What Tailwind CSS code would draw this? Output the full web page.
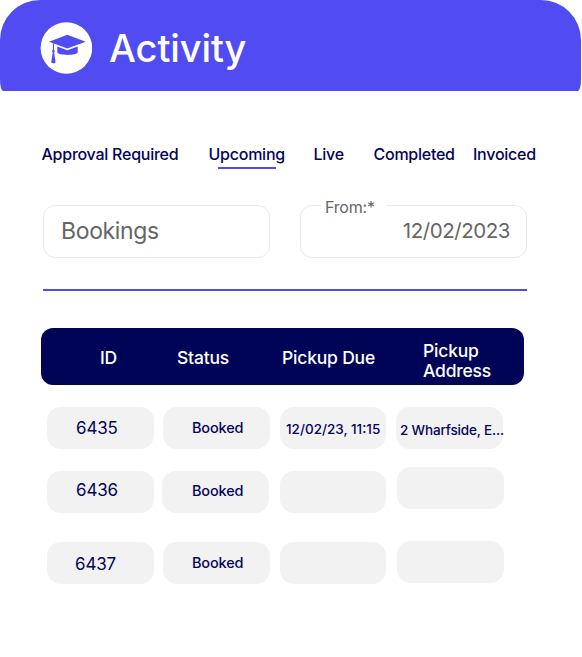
<!DOCTYPE html>
<html lang="en">
<head>
    <meta charset="UTF-8">
    <meta name="viewport" content="width=device-width, initial-scale=1.0">
    <title>Activity</title>
    <script src="https://cdn.jsdelivr.net/npm/@tailwindcss/browser@4"></script>
</head>
<body class="bg-white font-['Inter',sans-serif] text-[#03045a]">
    <div class="w-[582px] h-[657px] overflow-hidden">
        <!-- Header -->
        <header class="w-[581px] h-[91px] bg-[#514cf2] [border-radius:40px_40px_3px_3px/40px_40px_12px_12px] flex items-center pl-10 pt-1">
            <svg class="size-[52px] shrink-0" viewBox="0 0 52 52">
                <circle cx="26.4" cy="26" r="25.8" fill="#fff"/>
                <g fill="#514cf2">
                    <path d="M27.3 12.8 L45.7 19.8 L27.3 26.6 L9 19.8 Z"/>
                    <path d="M17.3 24.6 L27.3 28.2 L37.7 24.6 V30.6 C36.5 33.8 18.5 33.8 17.3 30.6 Z"/>
                    <path d="M12.9 21.2 H14 V27.6 L14.8 29 L14.2 30.8 L15.6 40.6 Q13.4 42.2 11.2 40.6 L12.7 30.8 L12.1 29 L12.9 27.6 Z"/>
                </g>
            </svg>
            <h1 class="ml-[17px] text-[38px] leading-none font-medium tracking-[-0.1px] text-white">Activity</h1>
        </header>

        <!-- Tabs -->
        <nav class="mt-[53px] ml-[41.5px] grid grid-cols-[167px_105px_60px_99.5px_70px] text-base leading-5 font-medium tracking-[-0.25px] whitespace-nowrap">
            <a>Approval Required</a>
            <a>Upcoming<span class="block w-[58px] h-0.5 mt-[3px] ml-[9px] bg-[#514cf2]"></span></a>
            <a>Live</a>
            <a>Completed</a>
            <a>Invoiced</a>
        </nav>

        <!-- Filters -->
        <div class="mt-9 ml-[43px] flex gap-[30px] text-[#666]">
            <div class="w-[227px] h-[53px] border border-[#e9e9e9] rounded-xl px-[17px] text-[23px] leading-[50px] tracking-[-0.35px]">Bookings</div>
            <div class="relative w-[227px] h-[53px] border border-[#e9e9e9] rounded-xl px-4 text-right text-[20.5px] leading-[50px] tracking-[-0.45px]">
                <span class="absolute left-5 -top-[9px] w-[66px] bg-white pl-1 text-left text-base leading-5 tracking-[-0.2px]">From:*</span>
                12/02/2023
            </div>
        </div>

        <div class="mt-[31px] ml-[43px] w-[484px] h-[2px] bg-[#514cf2]"></div>

        <!-- Table head -->
        <div class="mt-[37px] ml-[41px] w-[483px] h-[57px] rounded-xl bg-[#000456] text-white grid grid-cols-[59px_77px_105px_141px_1fr] items-center text-[17.5px] leading-5 font-medium tracking-[-0.2px] whitespace-nowrap">
            <span></span>
            <span class="pt-[3px]">ID</span>
            <span class="pt-[3px]">Status</span>
            <span class="pt-[3px]">Pickup Due</span>
            <span class="pt-2">Pickup<br>Address</span>
        </div>

        <!-- Rows -->
        <div class="mt-[22px] ml-[47px] flex items-start whitespace-nowrap font-medium text-[14.5px] tracking-[-0.15px]">
            <div class="w-[107px] h-[42px] rounded-[14px] bg-[#f2f2f2] pl-[29px] text-[17px] leading-[42px] font-normal">6435</div>
            <div class="ml-[9px] w-[107px] h-[42px] rounded-[14px] bg-[#f2f2f2] pl-[29px] leading-[41px]">Booked</div>
            <div class="ml-[10px] w-[106px] h-[42px] rounded-[14px] bg-[#f2f2f2] pl-[6px] text-[13.5px] leading-[44px] tracking-[0px]">12/02/23, 11:15</div>
            <div class="ml-[10px] w-[107px] h-[42px] rounded-[14px] bg-[#f2f2f2] pl-[4px] text-[13.5px] leading-[46px]">2 Wharfside, E...</div>
        </div>
        <div class="mt-[18px] ml-[47px] flex items-start whitespace-nowrap font-medium text-[14.5px] tracking-[-0.15px]">
            <div class="mt-1 w-[107px] h-[42px] rounded-[14px] bg-[#f2f2f2] pl-[29px] text-[17px] leading-[39px] font-normal">6436</div>
            <div class="mt-1 ml-[8px] w-[107px] h-[42px] rounded-[14px] bg-[#f2f2f2] pl-[30px] leading-[40px]">Booked</div>
            <div class="mt-1 ml-[11px] w-[106px] h-[42px] rounded-[14px] bg-[#f2f2f2]"></div>
            <div class="ml-[11px] w-[107px] h-[42px] rounded-[14px] bg-[#f2f2f2]"></div>
        </div>
        <div class="mt-[28px] ml-[47px] flex items-start whitespace-nowrap font-medium text-[14.5px] tracking-[-0.15px]">
            <div class="mt-px w-[107px] h-[42px] rounded-[14px] bg-[#f2f2f2] pl-[28px] text-[17px] leading-[44px] font-normal">6437</div>
            <div class="mt-px ml-[9px] w-[107px] h-[42px] rounded-[14px] bg-[#f2f2f2] pl-[29px] leading-[41px]">Booked</div>
            <div class="mt-px ml-[10px] w-[106px] h-[42px] rounded-[14px] bg-[#f2f2f2]"></div>
            <div class="ml-[11px] w-[107px] h-[42px] rounded-[14px] bg-[#f2f2f2]"></div>
        </div>
    </div>
</body>
</html>
